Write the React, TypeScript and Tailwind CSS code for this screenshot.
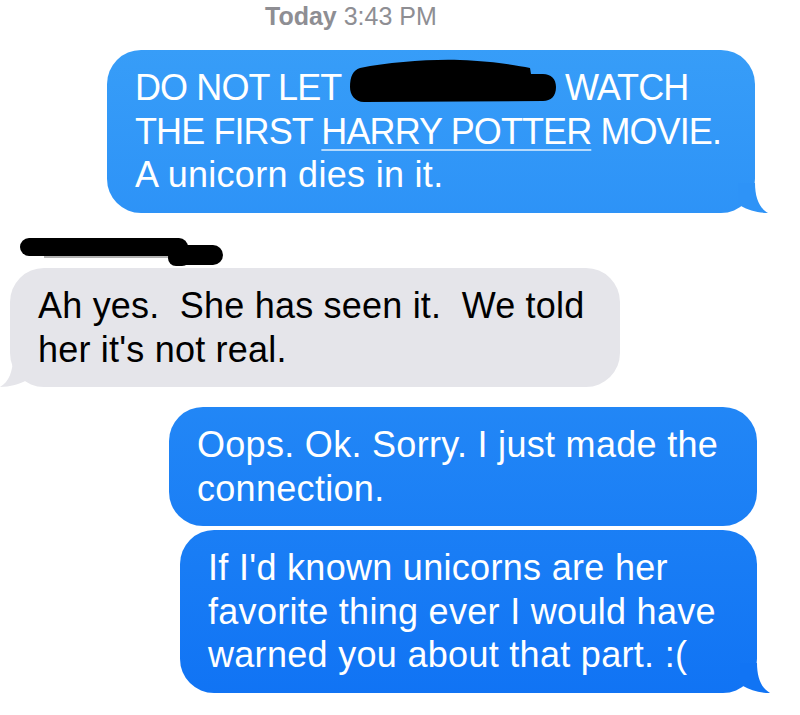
import React from 'react';

const blue = 'bg-linear-to-b from-[#3aa0f8] to-[#0f72f4] bg-fixed text-white';

const TailRight: React.FC<{ fill: string }> = ({ fill }) => (
  <svg className="absolute -right-[13px] bottom-0" width="30" height="30" viewBox="0 0 30 30">
    <path d="M17 0 C17 14, 21 25, 30 30 C20 30, 10 27, 3 23 C1 22, 0 20, 0 18 L0 0 Z" fill={fill} />
  </svg>
);

const TailLeft: React.FC<{ fill: string }> = ({ fill }) => (
  <svg className="absolute -left-[10px] bottom-0" width="30" height="30" viewBox="0 0 30 30">
    <path d="M13 0 C13 14, 9 25, 0 30 C10 30, 20 27, 27 23 C29 22, 30 20, 30 18 L30 0 Z" fill={fill} />
  </svg>
);

const Bubble: React.FC<{
  className: string;
  tail?: 'right' | 'left';
  tailFill?: string;
  lines: React.ReactNode[];
}> = ({ className, tail, tailFill = '#e5e5ea', lines }) => (
  <div className={`relative rounded-[34px] py-[16px] pl-[28px] text-[36px] leading-[43.5px] ${className}`}>
    {lines.map((line, i) => (
      <div key={i} className="whitespace-pre">
        {line}
      </div>
    ))}
    {tail === 'right' && <TailRight fill={tailFill} />}
    {tail === 'left' && <TailLeft fill={tailFill} />}
  </div>
);

export default function App() {
  return (
    <div className="w-[800px] h-[715px] overflow-hidden bg-white font-['Liberation_Sans',Arial,sans-serif]">
      <div className="h-[50px] pl-[265px] pt-[1px] text-[25px] leading-[30px] text-[#8e8e93]">
        <span className="font-bold">Today</span> 3:43 PM
      </div>

      <Bubble
        className={`ml-[107px] w-[648px] ${blue}`}
        tail="right"
        tailFill="#2e93f7"
        lines={[
          <span className="tracking-[-0.9px]">
            DO NOT LET{' '}
            <svg width="206" height="44" viewBox="0 0 206 44" className="-mt-[12px] inline-block align-[-3px]">
              <path
                d="M10 9 C40 3, 80 0, 110 1 C140 2, 165 6, 180 9 L181 15 L193 15 C201 15, 206 20, 206 28 C206 37, 201 42, 193 42 L14 43 C5 43, 0 36, 0 28 C0 18, 3 11, 10 9 Z"
                fill="#000"
              />
            </svg>{' '}
            WATCH
          </span>,
          <span className="tracking-[-0.9px]">
            THE FIRST{' '}
            <span className="underline decoration-[#b4d9fc] decoration-[1.5px] underline-offset-[5px]">HARRY POTTER</span>{' '}
            MOVIE.
          </span>,
          <span className="tracking-[0.3px]">A unicorn dies in it.</span>,
        ]}
      />

      <div className="h-[55.5px] pt-[23px] pl-[18px]">
        <svg width="208" height="32" viewBox="0 0 208 32">
          <line x1="26" y1="21" x2="150" y2="21" stroke="#9a9a9a" strokeWidth="1.5" />
          <rect x="2" y="2" width="168" height="18" rx="9" fill="#000" />
          <rect x="150" y="9" width="55" height="20" rx="10" fill="#000" />
          <rect x="150" y="14" width="22" height="16" rx="8" fill="#000" />
        </svg>
      </div>

      <Bubble
        className="ml-[10px] w-[610px] bg-[#e5e5ea] text-black tracking-[0.2px]"
        tail="left"
        tailFill="#e5e5ea"
        lines={['Ah yes.  She has seen it.  We told', "her it's not real."]}
      />

      <Bubble
        className={`mt-[20px] ml-[169px] w-[588px] tracking-[0.3px] ${blue}`}
        lines={['Oops. Ok. Sorry. I just made the', 'connection.']}
      />

      <Bubble
        className={`mt-[4px] ml-[180px] w-[577px] tracking-[0.3px] ${blue}`}
        tail="right"
        tailFill="#1174f4"
        lines={["If I'd known unicorns are her", 'favorite thing ever I would have', 'warned you about that part. :(']}
      />
    </div>
  );
}
